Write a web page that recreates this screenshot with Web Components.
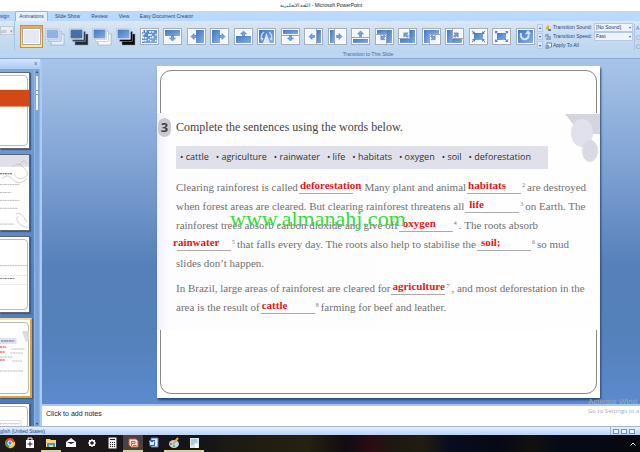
<!DOCTYPE html>
<html lang="en"><head><meta charset="utf-8"><title>PowerPoint</title>
<style>
html,body{margin:0;height:100%;overflow:hidden}
body{font-family:"Liberation Sans","Noto Sans",sans-serif;font-size:5px;color:#2c4878;background:#fff}
</style></head><body>
<ppt-window></ppt-window>
<script>
const define=(name,html,setup)=>customElements.define(name,class extends HTMLElement{
  connectedCallback(){
    if(this.shadowRoot)return;
    const root=this.attachShadow({mode:'open'});
    const t=document.createElement('template');
    t.innerHTML=html;
    root.append(t.content.cloneNode(true));
    if(setup)setup(this,root);
  }
});

/* Slide-transition tiles */
const B='url(#b)',W='#f3f6fb';
const arrow=(x,y,r)=>`<path transform="translate(${x} ${y}) rotate(${r})" d="M-2.5-1H0V-3L3 0 0 3V1H-2.5Z" fill="#79a0da" stroke="#3e6cb0" stroke-width=".5"/>`;
const mini=(x,y,r)=>`<path transform="translate(${x} ${y}) rotate(${r})" d="M-2-.5H0V-2L2 0 0 2V.5H-2Z" fill="#5c80b8"/>`;
const stack=(top,shadow,faint)=>`<rect x="6" y="6" width="13" height="11" fill="${shadow}" stroke="#8b98aa" stroke-width=".5"/><rect x="3.5" y="3.5" width="13" height="10" fill="${faint}" stroke="#a3afbf" stroke-width=".5"/><rect x=".5" y=".5" width="14" height="11" fill="#fff" stroke="#a9b4c4" stroke-width=".5"/><rect x="1.5" y="1.5" width="12" height="9" fill="${top}"/>`;
const tile=inner=>`<rect x=".5" y=".5" width="18" height="16" fill="#fff" stroke="#a4adb9"/><rect x="2" y="2" width="15" height="13" fill="${W}"/>${inner}`;
const blue=(x,y,w,h)=>`<rect x="${x}" y="${y}" width="${w}" height="${h}" fill="${B}"/>`;
const corners=out=>[[4.5,4.5,225],[14.5,4.5,315],[14.5,12.5,45],[4.5,12.5,135]].map(([x,y,r])=>mini(x,y,out?r:r+180)).join('');
const art={
 none:`<rect x=".5" y=".5" width="18" height="16" fill="#fff" stroke="#b4a78f"/><rect x="2" y="2" width="15" height="13" fill="#e6e9f1"/>`,
 fade:stack('#8fb2df','#e8eef6','#c9dbf0'),
 black:stack('#476fa9','#222b3a','#3c4654'),
 cut:stack(B,'#f6f8fb','#fff'),
 cutblack:stack(B,'#05070a','#05070a'),
 dissolve:tile(blue(2,2,15,13)+[...Array(34)].map((_,i)=>`<rect x="${2+(i*5+(i*i)%7)%14}" y="${2+(i*3+(i*i)%5)%12}" width="1.5" height="1.5" fill="#e5edf8"/>`).join('')),
 down:tile(blue(2,2,15,6)+arrow(9.5,10,90)), left:tile(blue(9,2,8,13)+arrow(7,8.5,180)),
 right:tile(blue(2,2,8,13)+arrow(12,8.5,0)), up:tile(blue(2,8,15,7)+arrow(9.5,6,270)),
 wedge:tile(blue(2,2,15,13)+'<path d="M9.5 5 6 15H13Z" fill="#dce7f6"/><path d="M7 4Q3 7 5 11M12 4Q16 7 14 11" fill="none" stroke="#c9dcf5" stroke-width="1.2"/><path d="M3 10H6.5L5 13ZM12.5 10H16L14 13Z" fill="#c9dcf5"/>'),
 cdown:tile(blue(2,2,15,4)+'<path d="M1 7.5H18" stroke="#9aa5b5"/>'+arrow(9.5,10,90)),
 cleft:tile(blue(13,2,4,13)+'<path d="M12.5 1V16" stroke="#9aa5b5"/>'+arrow(8,8.5,180)),
 cright:tile(blue(2,2,4,13)+'<path d="M6.5 1V16" stroke="#9aa5b5"/>'+arrow(11,8.5,0)),
 cup:tile(blue(2,11,15,4)+'<path d="M1 9.5H18" stroke="#9aa5b5"/>'+arrow(9.5,6,270)),
 ld:tile(blue(2,2,15,4)+blue(12,2,5,13)+'<path d="M1 6.5H11.5V16" fill="none" stroke="#9aa5b5"/>'+arrow(8,9.5,135)),
 lu:tile(blue(2,11,15,4)+blue(12,2,5,13)+'<path d="M1 10.5H11.5V1" fill="none" stroke="#9aa5b5"/>'+arrow(8,7,225)),
 rd:tile(blue(2,2,15,4)+blue(2,2,5,13)+'<path d="M18 6.5H7.5V16" fill="none" stroke="#9aa5b5"/>'+arrow(11,9.5,45)),
 ru:tile(blue(2,11,15,4)+blue(2,2,5,13)+'<path d="M18 10.5H7.5V1" fill="none" stroke="#9aa5b5"/>'+arrow(11,7,315)),
 boxin:tile(blue(5,5,9,7)+corners(false)), boxout:tile(blue(5,5,9,7)+corners(true)),
 wheel:tile(blue(2,2,15,13)+'<path d="M5 5C4 10 7 12 10 11S13 7 12 6" fill="none" stroke="#d3e2f6" stroke-width="2"/><path d="M9 6 12 2 15 6Z" fill="#d3e2f6"/>')
};
define('transition-tile',`<style>
:host{display:flex;flex:1 1 0;justify-content:center;align-items:center;min-width:0}
button{all:unset;display:grid;place-items:center;width:23px;height:23px;box-sizing:border-box}
:host([selected]) button{border:1px solid #c98e3d;background:linear-gradient(#e8a45a,#ffd990 40%,#ffe88e)}
svg{display:block}</style><button><svg></svg></button>`,(el,r)=>{
  const k=el.getAttribute('kind'), wide=/fade|black|^cut/.test(k);
  r.querySelector('button').setAttribute('aria-label',k);
  r.querySelector('svg').outerHTML=`<svg width="${wide?20:19}" height="18" viewBox="0 0 ${wide?20:19} 18"><defs><linearGradient id="b" x2="1" y2="1"><stop stop-color="#4076c2"/><stop offset="1" stop-color="#86afe5"/></linearGradient></defs>${art[k]}</svg>`;
});

define('title-bar',`<style>:host{display:block;height:11px;line-height:11px;padding-left:2px;text-align:center;background:#fff;color:#222}</style><slot></slot>`);

define('tab-strip',`<style>
:host{display:flex;height:10px;background:#bbd8ff;line-height:11px}
button{all:unset;box-sizing:border-box;text-align:center;height:10px;white-space:nowrap}
.on{background:#e7f1fc;border:1px solid #8fb4e5;border-bottom:0;border-radius:2px 2px 0 0;line-height:9px}
.a{width:15px;text-align:left}.b{width:33px}.c{width:39px}.d{width:25px}.e{width:24px}.f{width:61px}
</style><button class="a">sign</button><button class="on b">Animations</button><button class="c">Slide Show</button><button class="d">Review</button><button class="e">View</button><button class="f">Easy Document Creator</button>`);

define('ribbon-bar',`<style>
:host{display:block;height:38px;background:linear-gradient(#dce8f5,#cbdff3 30%,#bfd7ef 75%,#c7ddf5);border-bottom:1px solid #86a9d6;box-sizing:border-box}
.row{display:flex;height:29px}
.prev{width:15px;padding-top:5px;border-right:1px solid #a9c3e3;box-sizing:border-box}
.prev button{all:unset;display:flex;justify-content:space-between;width:14px;height:9px;line-height:8px;background:#e9edf2;color:#8c98a8;border:1px solid #c0cbd9;box-sizing:border-box}
.gallery{flex:1;display:flex;align-items:center;margin:2px 0 0 5px}
.scroll{width:6px;margin:3px 2px 1px 0;display:grid;grid-template-rows:1fr 1fr 1fr;gap:1px}
.scroll button{all:unset;background:#dce9f8;border:1px solid #b2cae8;box-sizing:border-box;font-size:4px;line-height:5px;text-align:center}
form{width:88px;display:grid;grid-template-rows:9px 9px 9px;padding-top:2px;box-sizing:border-box}
form>div{display:grid;grid-template-columns:8px 41px 39px;align-items:center;line-height:9px;white-space:nowrap}
select{appearance:none;border:1px solid #b3c9e4;border-radius:0;background:#edf4fc;font:inherit;color:#223b66;height:9px;padding:0 1px;margin:0;width:39px;line-height:7px}
.sel{position:relative;display:grid}
.sel:after{content:"";position:absolute;right:2px;top:4px;border:1px solid transparent;border-top:2px solid #53698a}
form button{all:unset;grid-column:2/4}
.side{width:6px;border-left:1px solid #a9c3e3;margin:3px 0 0 1px;padding-left:1px;line-height:9px;box-sizing:border-box;color:#5c7398}
.cap{display:flex;justify-content:center;padding-left:96px;height:8px;line-height:8px;background:#bcd5f1;color:#4a6c9f;border-radius:0 0 2px 2px}
</style>
<div class="row"><div class="prev"><button>on <span>▾</span></button></div><div class="gallery"></div>
<div class="scroll"><button aria-label="Up">▴</button><button aria-label="Down">▾</button><button aria-label="More">▾</button></div>
<form><div><svg width="7" height="8"><path d="M1 3 4 1V6L1 5Z" fill="#e2ae33"/><path d="M3 5H6V7H3Z" fill="#587cae"/></svg><label for="so">Transition Sound:</label><span class="sel"><select id="so"><option>[No Sound]</option></select></span></div>
<div><svg width="7" height="8"><path d="M1 1V4M3 1V5M5 3V7M1 6H4" stroke="#57749e"/></svg><label for="sp">Transition Speed:</label><span class="sel"><select id="sp"><option>Fast</option></select></span></div>
<div><svg width="7" height="8"><path d="M2 1H6.5V5H2Z" fill="#fff" stroke="#6283b4"/><path d="M.5 3H4V7H.5Z" fill="#829ec5"/></svg><button>Apply To All</button></div></form>
<div class="side">A<br>▢<br>▢</div></div><div class="cap">Transition to This Slide</div>`,(el,r)=>{
  'none fade black cut cutblack dissolve down left right up wedge cdown cleft cright cup ld lu rd ru boxin boxout wheel'.split(' ').forEach((k,i)=>{
    const t=document.createElement('transition-tile');t.setAttribute('kind',k);if(!i)t.setAttribute('selected','');
    r.querySelector('.gallery').append(t);
  });
});

define('slide-thumb',`<style>
:host{display:block;flex:none;height:77px;margin-right:4px;background:#fff;border:1px solid #5c6675;border-left:0;box-sizing:border-box;box-shadow:1px 1px 1px #3d5c8c;overflow:hidden}
:host([selected]){height:80px;margin-right:2px;border:2px solid #e2a22d;border-left:0;border-top-color:#f7dc91}
svg{display:block;width:100%;height:100%}</style><svg viewBox="0 0 29 76" preserveAspectRatio="none"></svg>`,(el,r)=>{
  const frame='<path d="M0 2.5H24Q27.5 2.5 27.5 6V70Q27.5 73.5 24 73.5H0" fill="none" stroke="#999" stroke-width=".7"/>';
  const bars=a=>a.map(([x,y,w,c])=>`<path d="M${x} ${y}h${w}" stroke="${c||'#bbb'}" stroke-width="1" stroke-dasharray="2 .5"/>`).join('');
  const kinds={
   title:frame+'<rect y="17" width="29" height="17" fill="#d34817"/>',
   plants:'<rect width="29" height="12" fill="#dfe0e8"/>'+bars([[0,19,12,'#555'],[0,30,20],[0,38,11],[0,46,20],[0,54,18],[0,70,14]])+'<g fill="none" stroke="#bbc" stroke-width=".7"><path d="M12 12Q18 7 23 12T28 20Q20 28 14 20M2 24Q8 18 13 25T27 24M18 62Q14 66 22 72L28 74M16 60Q20 56 27 68M20 10Q24 2 27 9"/></g>',
   words:frame+bars([[0,29,27],[0,42,15,'#888']])+'<path d="M0 48H27M0 39H27" stroke="#ddd" stroke-width=".6"/>',
   current:frame+'<path d="M21 11H28V20L25 22Z" fill="#d9dbe6"/><rect y="18" width="16" height="6" fill="#dfe1ec"/>'+bars([[1,21,13,'#667'],[0,27,6,'#e22'],[11,29,13],[0,32,5,'#e22'],[10,33,12],[0,37,12],[0,40,5,'#e22'],[12,41,9],[0,51,22]]),
   next:'<path d="M0 2.5H24Q27.5 2.5 27.5 6V76" fill="none" stroke="#999" stroke-width=".7"/><rect x="-1" y="17" width="22" height="20" fill="#fff" stroke="#bbb" stroke-width=".5"/>'+bars([[0,20,20],[0,25,18]])
  };
  r.querySelector('svg').innerHTML=kinds[el.getAttribute('kind')];
});

define('slide-panel',`<style>
:host{display:grid;grid-template:10px 1fr/1fr 6px;width:42px;flex:none;background:linear-gradient(#86aadb,#7199d0 20%,#5482be 60%,#4d7bb9);border-right:2px solid #a9cbf4;box-sizing:border-box;min-height:0}
header{grid-column:1/3;background:linear-gradient(#d5e7fc,#a9caf4);padding-right:3px;text-align:right;line-height:9px}
header button{all:unset}
.list{display:flex;flex-direction:column;gap:5px;padding-top:3px;overflow:hidden;min-height:0}
.bar{display:flex;flex-direction:column;justify-content:space-between;background:#7aa3d9;border-inline:1px solid #8fb5e6;font-size:4px;text-align:center;color:#1c3e70}
.bar i{display:block;height:36px;background:#edf2f8;border:1px solid #8aa6ca;box-sizing:border-box;margin-top:1px;padding-top:14px}
.bar i:after{content:"";display:block;width:2px;height:5px;margin:0 auto;border-block:1px solid #899;box-sizing:border-box}
</style><header><button aria-label="Close">x</button></header><div class="list"><slot></slot></div><div class="bar"><div>▴<i></i></div><div>▾</div></div>`);

define('answer-blank',`<style>
:host{display:block;position:relative;flex:none;width:54px;height:13px;border-bottom:1px solid #aaa;box-sizing:border-box;margin-left:1px}
b{position:absolute;left:var(--shift,4px);bottom:2px;font:bold 11px/11px "Liberation Serif",serif;color:#e01818;white-space:nowrap}
sup{position:absolute;left:55px;top:1px;font-size:6px;line-height:6px;color:#777}
</style><b><slot></slot></b><sup></sup>`,(el,r)=>{r.querySelector('sup').textContent=el.getAttribute('n')||''});

define('word-bank',`<style>
:host{display:flex;justify-content:space-between;height:23px;padding:0 17px 0 4px;background:#dfe0ea;box-sizing:border-box;font:9px/22px "Open Sans","Noto Sans",sans-serif;color:#333;white-space:nowrap}
</style><slot></slot>`);

define('lesson-slide',`<style>
:host{display:block;position:relative;background:#fff;box-shadow:1px 2px 2px #294873;height:332px;box-sizing:border-box;padding:4px 3px}
.frame{height:100%;border:1px solid #888;border-radius:11px;box-sizing:border-box}
.scan{position:absolute;left:0;right:0;top:47px;height:217px;background:linear-gradient(90deg,#f0f2fb,#fdfdff 3%,#fefefe);font:11px/19px "Liberation Serif",serif;color:#707070}
h1{display:flex;align-items:center;gap:5px;margin:0;padding:4px 0 0 1px;font:12px/20px "Liberation Serif",serif;color:#444}
h1 span{width:13px;height:19px;border-radius:7px;background:#c9c9d3;text-align:center;font:bold 13px/19px "Open Sans",sans-serif}
.deco{position:absolute;right:0;top:0}
article{padding:9px 0 0 19px}
word-bank{margin:9px 52px 0 19px}
p{margin:0 0 6px;white-space:nowrap}
.l{display:flex;align-items:center;height:19px}
.n{margin-left:6px}
.wm{position:absolute;left:73px;top:94px;font:22px/24px "Liberation Serif",serif;color:#35dc35}
</style><div class="frame"></div><section class="scan">
<svg class="deco" width="35" height="50"><path d="M0 1H35V21H22L11 15Z" fill="#d4d5df"/><ellipse cx="17" cy="20" rx="11" ry="14" fill="#e0e1eb"/><ellipse cx="25" cy="38" rx="8" ry="11" fill="#d8d9e5"/></svg>
<h1><span>3</span>Complete the sentences using the words below.</h1>
<word-bank><span>• cattle</span><span>• agriculture</span><span>• rainwater</span><span>• life</span><span>• habitats</span><span>• oxygen</span><span>• soil</span><span>• deforestation</span></word-bank>
<article><p>
<span class="l">Clearing rainforest is called<answer-blank style="--shift:1px">deforestation</answer-blank><span class="n">. Many plant and animal</span><answer-blank n="2" style="--shift:1px">habitats</answer-blank><span class="n">are destroyed</span></span>
<span class="l">when forest areas are cleared. But clearing rainforest threatens all<answer-blank n="3">life</answer-blank><span class="n">on Earth. The</span></span>
<span class="l">rainforest trees absorb carbon dioxide and give off<answer-blank n="4">oxygen</answer-blank><span class="n">. The roots absorb</span></span>
<span class="l"><answer-blank n="5" style="--shift:-4px">rainwater</answer-blank><span class="n">that falls every day. The roots also help to stabilise the</span><answer-blank n="6">soil;</answer-blank><span class="n">so mud</span></span>
<span class="l">slides don’t happen.</span></p><p>
<span class="l">In Brazil, large areas of rainforest are cleared for<answer-blank n="7" style="--shift:1px">agriculture</answer-blank><span class="n">, and most deforestation in the</span></span>
<span class="l">area is the result of<answer-blank n="8" style="--shift:1px">cattle</answer-blank><span class="n">farming for beef and leather.</span></span></p></article>
<div class="wm">www.almanahj.com</div></section>`);

define('task-bar',`<style>
:host{display:flex;height:17px;background:linear-gradient(90deg,#211a19,#151419 32%,#1c1b12 36%,#26210f 48%,#120b12 54%,#2b0d12 58%,#1c1910 62%,#221d10 66%,#080d1e 70%,#060915 78%,#12110f 83%,#050a18 88%,#08090c);color:#eee}
button{all:unset;width:20px;height:17px;display:grid;place-items:center;box-sizing:border-box;border-bottom:2px solid transparent;margin-right:1px}
button:nth-child(even){margin-right:0}
.open{border-color:#d9d391}.act{background:#484144}
div{flex:1;display:flex;justify-content:flex-end;align-items:center;padding-right:4px}
</style>
<button aria-label="Chrome"><svg width="12" height="12"><circle cx="6" cy="6" r="5" fill="#e04b38"/><path d="M1.5 4 6 6 5 11A5 5 0 0 1 1.5 4" fill="#36a852"/><path d="M6 6 11 5A5 5 0 0 1 5 11Z" fill="#f9c92f"/><circle cx="6" cy="6" r="2.5" fill="#fff"/><circle cx="6" cy="6" r="1.7" fill="#4384ef"/></svg></button>
<button aria-label="Store"><svg width="10" height="12"><path d="M3 4V1H7V4" fill="none" stroke="#fff"/><path d="M1 3H9V11H1Z" fill="#fff"/><path d="M2.5 7H7.5M5 4.5V9.5" stroke="#222"/></svg></button>
<button class="open" aria-label="Explorer"><svg width="12" height="12"><path d="M1 2H5L6 3H11V10H1Z" fill="#f6d878"/><path d="M2 6H10V10H8V8H4V10H2Z" fill="#3999cf"/></svg></button>
<button aria-label="Mail"><svg width="12" height="12"><path d="M1 5 6 1 11 5V10H1Z" fill="#fff"/><path d="M2 5H10L6 7Z" fill="#222"/></svg></button>
<button aria-label="Settings"><svg width="10" height="12"><circle cx="5" cy="6" r="2.5" fill="none" stroke="#fff" stroke-width="1.5"/><path d="M5 2V3.5M5 8.5V10M1 6H2.5M7.5 6H9M2 3 3 4M7 8 8 9M8 3 7 4M3 8 2 9" stroke="#fff"/></svg></button>
<button aria-label="Calculator"><svg width="9" height="12"><path d="M.5.5H8.5V11.5H.5Z" fill="#eee"/><path d="M2 2.5H7M2 5.5H3M4 5.5H5M6 5.5H7M2 7.5H3M4 7.5H5M6 7.5H7M2 9.5H3M4 9.5H5M6 9.5H7" stroke="#222"/></svg></button>
<button class="open act" aria-label="PowerPoint"><svg width="11" height="12"><path d="M1 2H8L10 4V10H3L1 8Z" fill="#fbe4db" stroke="#dc5431"/><path d="M3.5 4.5H7V6.5H3.5ZM3.5 6.5V9M5 8.5H8.5" fill="none" stroke="#dc5431"/></svg></button>
<button aria-label="Word"><svg width="11" height="12"><path d="M3 1H10V10H3Z" fill="#e5effc" stroke="#5277b3"/><path d="M1 3H7V9H1Z" fill="#3165b0"/><path d="M2 4 3 8 4 5 5 8 6 4" stroke="#fff" fill="none"/></svg></button>
<button class="open" aria-label="Paint"><svg width="12" height="12"><ellipse cx="6" cy="7" rx="5" ry="4" fill="#bcd8e9"/><circle cx="3" cy="7" r="1" fill="#d54636"/><circle cx="6" cy="9" r="1" fill="#46a849"/><path d="M5 7 10 1" stroke="#e3a746" stroke-width="2"/></svg></button>
<button class="open" aria-label="Notepad"><svg width="11" height="12"><path d="M1 1H10V11H1Z" fill="#d9e8ef"/><path d="M2 3H8M2 5H8M2 7H5" stroke="#8daab9"/><path d="M6 7H9V11H6Z" fill="#f8f8f8"/></svg></button><div><svg width="6" height="4"><path d="M.5 3.5 3 1 5.5 3.5" fill="none" stroke="#eee"/></svg></div>`);

define('ppt-window',`<style>
:host{display:flex;flex-direction:column;height:100%}
.work{flex:1;display:flex;min-height:0}
main{flex:1;min-width:0;display:flex;flex-direction:column}
.canvas{flex:1;padding:7px 40px 0 115px;background:linear-gradient(#a8c4e8,#87a9d9 25%,#5680b9 60%,#5480bb 80%,#5c8acd);min-height:0}
.notes{height:22px;box-sizing:border-box;padding:0 4px;background:#fff;border-top:2px solid #a3c8f3;font:7px/15px "Liberation Sans",sans-serif;color:#222}
.notes textarea{all:unset;display:block;width:100%;height:18px;line-height:15px}
.status{display:flex;justify-content:space-between;height:9px;line-height:8px;background:linear-gradient(#e6f0fd,#b8d2f8);border-top:1px solid #a8b8cc;box-sizing:border-box}
.views{display:flex;gap:2px;align-items:center;width:30px;border-left:1px solid #9bb7de;padding-left:2px;box-sizing:border-box}
.views button{all:unset;width:6px;height:5px;border:1px solid #7890b3;background:#eef4fc;box-sizing:border-box}
.act{position:absolute;right:0;bottom:36px;width:52px;white-space:nowrap;color:#a7acb4;font:6px/9px "Open Sans",sans-serif}
.act strong{display:block;font:8px/10px "Liberation Sans",sans-serif;color:#9da6b3}
</style>
<title-bar>اللغة الانجليزية - Microsoft PowerPoint</title-bar><tab-strip></tab-strip><ribbon-bar></ribbon-bar>
<div class="work"><slide-panel><slide-thumb kind="title"></slide-thumb><slide-thumb kind="plants"></slide-thumb><slide-thumb kind="words"></slide-thumb><slide-thumb kind="current" selected></slide-thumb><slide-thumb kind="next"></slide-thumb></slide-panel>
<main><div class="canvas"><lesson-slide></lesson-slide></div><div class="notes"><textarea aria-label="Notes">Click to add notes</textarea></div></main></div>
<div class="status"><span>glish (United States)</span><div class="views"><button aria-label="Normal"></button><button aria-label="Sorter"></button><button aria-label="Show"></button></div></div>
<task-bar></task-bar><div class="act"><strong>Activate Wind</strong>Go to Settings to a</div>`);
</script></body></html>
